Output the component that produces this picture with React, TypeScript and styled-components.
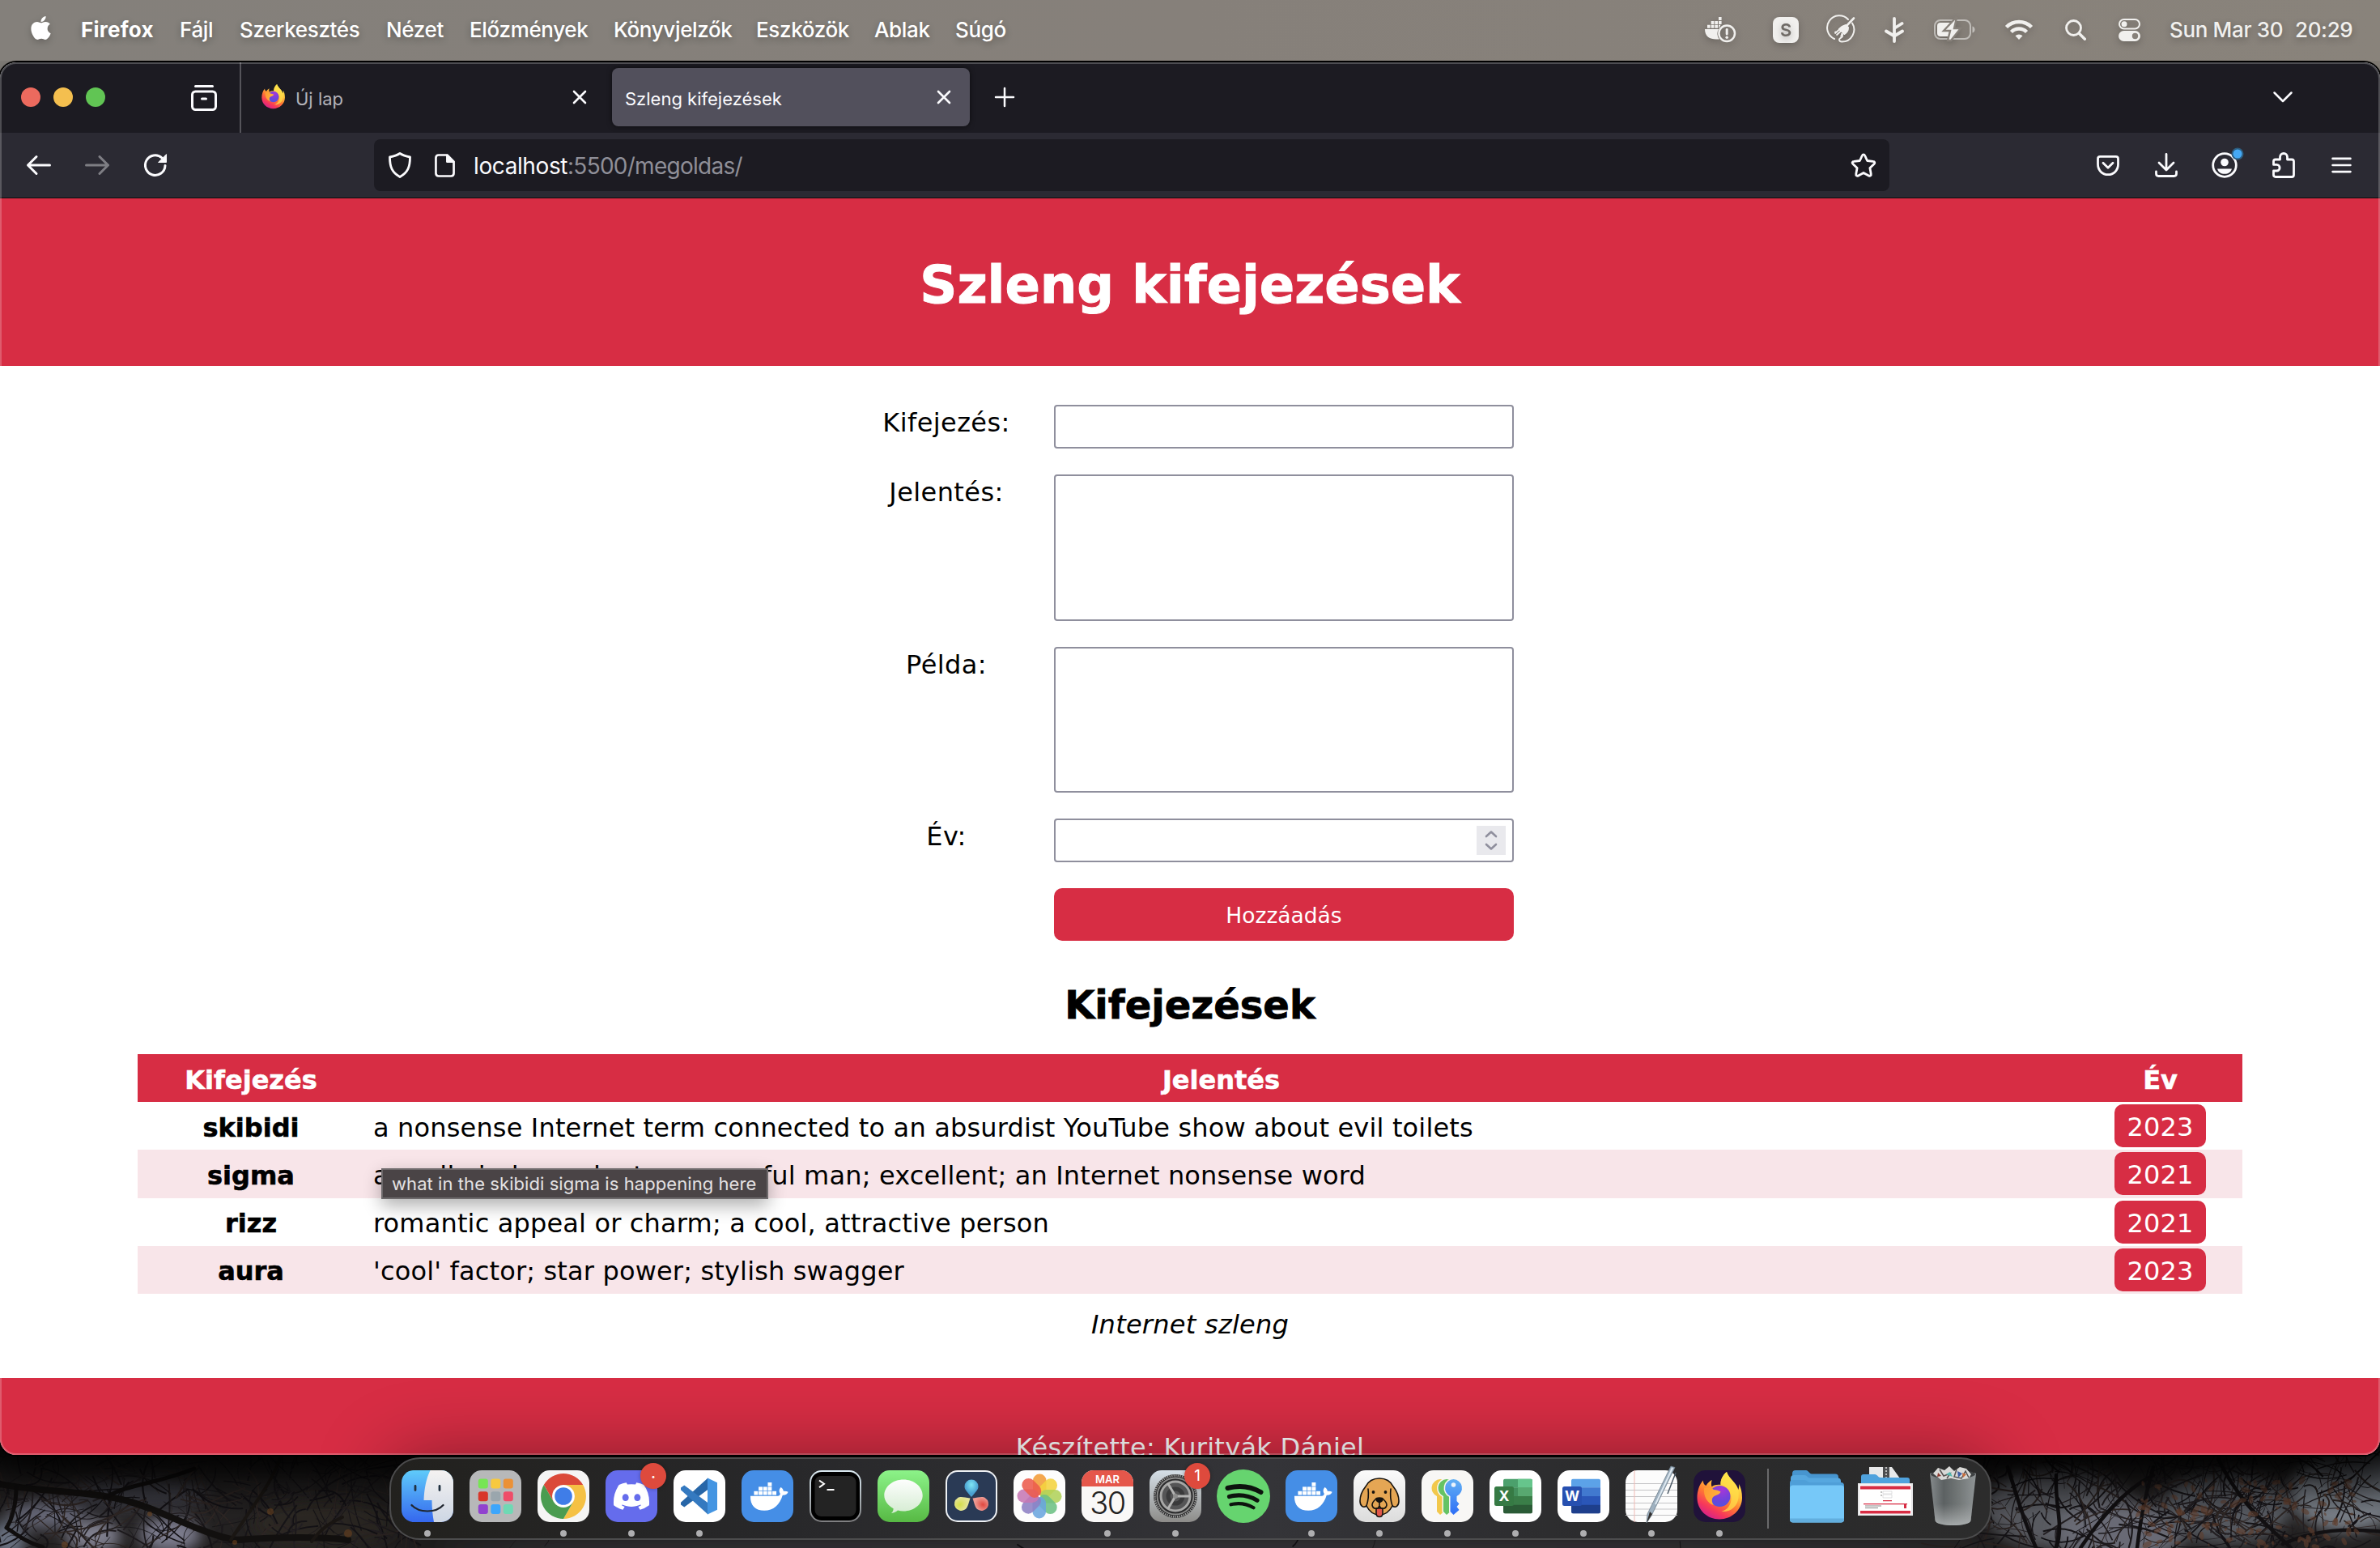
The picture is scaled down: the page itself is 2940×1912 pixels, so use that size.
import React from 'react';
import styled, { createGlobalStyle } from 'styled-components';
import { FaApple, FaDiscord } from 'react-icons/fa';

const RED = '#d72d44';
const SYSTEM_FONT = `Inter, "Liberation Sans", sans-serif`;
const PAGE_FONT = `"DejaVu Sans", Verdana, sans-serif`;

const GlobalStyle = createGlobalStyle`
  * { box-sizing: border-box; }
  body { margin: 0; overflow: hidden; background: #0b0b0c; }
`;

/* ---------- Desktop ---------- */

const Desktop = styled.div`
  position: relative;
  width: 2940px;
  height: 1912px;
  overflow: hidden;
  display: flex;
  flex-direction: column;
  background: linear-gradient(90deg, #84807b, #89837b) 0 0 / 100% 200px no-repeat, #0b0b0c;
  font-family: ${SYSTEM_FONT};
`;

const Wallpaper = styled.svg`
  position: absolute;
  left: 0;
  bottom: 0;
  width: 2940px;
  height: 160px;
`;

/* ---------- Menu bar ---------- */

const MenuBar = styled.header`
  position: relative;
  flex: none;
  display: flex;
  align-items: center;
  height: 75px;
  padding: 0 0 2px 34px;
  background: linear-gradient(90deg, #84807b, #86807a 50%, #89837b);
  color: #fff;
  font-size: 26px;
  font-weight: 500;
  letter-spacing: -0.35px;
  line-height: 36px;
  white-space: pre;
  text-shadow: 0 3px 8px rgba(0, 0, 0, 0.3);

  svg { filter: drop-shadow(0 3px 4px rgba(0, 0, 0, 0.22)); }
`;

const AppleSlot = styled.span`
  display: flex;
  width: 66px;
  padding-bottom: 4px;
`;

const MenuItem = styled.span<{ $width: number; $strong?: boolean }>`
  width: ${(p) => p.$width}px;
  font-weight: ${(p) => (p.$strong ? 700 : 500)};
  letter-spacing: ${(p) => (p.$strong ? '0.25px' : 'inherit')};
`;

const StatusArea = styled.div`
  display: flex;
  align-items: center;
  margin-left: auto;
  color: #f1f0ee;
`;

const StatusSlot = styled.span<{ $width: number }>`
  display: flex;
  align-items: center;
  width: ${(p) => p.$width}px;
`;

/* ---------- Browser window ---------- */

const Window = styled.section`
  position: relative;
  flex: none;
  display: flex;
  flex-direction: column;
  height: 1720px;
  margin-top: 2px;
  border-radius: 20px;
  overflow: hidden;
  background: #fff;

  &::after {
    content: '';
    position: absolute;
    inset: 0;
    border-radius: 20px;
    box-shadow: inset 0 0 0 2px rgba(255, 255, 255, 0.22);
    pointer-events: none;
  }
`;

const WindowShade = styled.div`
  position: absolute;
  left: 0;
  top: 77px;
  width: 2940px;
  height: 1720px;
  border-radius: 20px;
  box-shadow: 0 0 0 2px #000, 0 18px 40px rgba(0, 0, 0, 0.7);
`;

const TabBar = styled.div`
  flex: none;
  display: flex;
  align-items: center;
  height: 87px;
  padding-bottom: 1px;
  background: #1c1b22;
  color: #fbfbfe;
`;

const TrafficLights = styled.div`
  display: flex;
  gap: 16px;
  width: 210px;
  padding-left: 26px;
`;

const Light = styled.span<{ $color: string }>`
  width: 24px;
  height: 24px;
  border-radius: 50%;
  background: ${(p) => p.$color};
`;

const TabOverview = styled.div`
  display: flex;
  align-items: center;
  justify-content: center;
  width: 88px;
  height: 87px;
  margin-bottom: -1px;
  padding-right: 4px;
  border-right: 2px solid #55545a;
  svg { margin-left: 2px; }
`;

const Tab = styled.div<{ $active?: boolean }>`
  display: flex;
  align-items: center;
  width: ${(p) => (p.$active ? 442 : 458)}px;
  height: 72px;
  padding: ${(p) => (p.$active ? '0 23px 0 16px' : '0 31px 0 23px')};
  border-radius: 8px;
  background: ${(p) => (p.$active ? '#52505c' : 'transparent')};
  box-shadow: ${(p) => (p.$active ? '0 0 6px rgba(0, 0, 0, 0.6)' : 'none')};
  color: ${(p) => (p.$active ? '#fbfbfe' : '#b3b2b8')};
  font-size: 22px;
  svg { color: #fbfbfe; }
`;

const TabTitle = styled.span`
  flex: 1;
  padding-top: 4px;
  line-height: 30px;
`;

const TabIcon = styled.span`
  display: flex;
  width: 44px;
  padding-bottom: 2px;
`;

const TabAction = styled.span<{ $pushRight?: boolean }>`
  display: flex;
  align-items: center;
  justify-content: center;
  width: 86px;
  margin-left: ${(p) => (p.$pushRight ? 'auto' : 0)};
  margin-right: ${(p) => (p.$pushRight ? '77px' : 0)};
`;

const NavBar = styled.div`
  flex: none;
  display: flex;
  align-items: center;
  height: 81px;
  padding: 0 12px;
  background: #2b2a33;
  border-bottom: 1px solid #0c0c0d;
  color: #fbfbfe;
`;

const NavButton = styled.span<{ $dim?: boolean }>`
  display: flex;
  justify-content: center;
  width: 72px;
  opacity: ${(p) => (p.$dim ? 0.4 : 1)};
`;

const UrlBar = styled.div`
  flex: 1;
  display: flex;
  align-items: center;
  height: 64px;
  margin: 0 234px;
  padding: 0 16px 0 18px;
  border-radius: 8px;
  background: #1c1b22;
  font-size: 28px;
  letter-spacing: -0.74px;
  line-height: 40px;
  svg + svg { margin-left: 29px; }
`;

const UrlText = styled.span`
  flex: 1;
  padding: 2px 0 0 23px;
  color: #8f8f98;
  b { color: #fbfbfe; font-weight: 400; letter-spacing: -0.4px; }
`;

/* ---------- Page ---------- */

const Page = styled.main`
  display: flex;
  flex-direction: column;
  align-items: center;
  color: #000;
  font-family: ${PAGE_FONT};
  font-size: 32px;
  letter-spacing: 0.16px;
  line-height: 44px;
`;

const PageHeader = styled.div`
  width: 100%;
  height: 207px;
  padding-top: 68px;
  background: ${RED};
`;

const PageTitle = styled.h1`
  margin: 0;
  color: #fff;
  font-size: 64px;
  letter-spacing: -0.05px;
  line-height: 78px;
  text-align: center;
  -webkit-text-stroke: 1px currentColor;
`;

const Form = styled.form`
  display: grid;
  grid-template-columns: 266px 568px;
  row-gap: 32px;
  width: 868px;
  padding: 48px 0 0;
`;

const Label = styled.label`
  letter-spacing: 0.4px;
  text-align: center;
`;

const fieldStyles = `
  display: block;
  width: 100%;
  margin: 0;
  border: 2px solid #8f8f9d;
  border-radius: 4px;
  background: #fff;
  outline: none;
`;

const TextInput = styled.input`
  ${fieldStyles}
  height: 54px;
`;

const TextArea = styled.textarea<{ $height: number }>`
  ${fieldStyles}
  height: ${(p) => p.$height}px;
  resize: none;
`;

const NumberField = styled.div`
  ${fieldStyles}
  display: flex;
  align-items: center;
  justify-content: flex-end;
  height: 54px;
  padding-right: 8px;
`;

const Spinner = styled.span`
  display: flex;
  align-items: center;
  justify-content: center;
  width: 36px;
  height: 36px;
  background: #e9e9ed;
  color: #8f8f9d;
`;

const SubmitButton = styled.button`
  grid-column: 2;
  height: 65px;
  padding: 1px 0 0;
  border: 0;
  border-radius: 10px;
  background: ${RED};
  color: #fff;
  font-family: inherit;
  font-size: 26.5px;
`;

const SectionTitle = styled.h2`
  margin: 50px 0 32px;
  font-size: 48px;
  letter-spacing: 0;
  line-height: 58px;
  -webkit-text-stroke: 0.8px currentColor;
`;

const Table = styled.div`
  display: grid;
  grid-auto-rows: 59.2px;
  width: 2600px;
`;

const TableRow = styled.div<{ $kind: 'head' | 'plain' | 'tinted' }>`
  display: grid;
  grid-template-columns: 280px 2117px 203px;
  align-items: center;
  background: ${(p) => (p.$kind === 'head' ? RED : p.$kind === 'tinted' ? '#f8e5e9' : '#fff')};
  color: ${(p) => (p.$kind === 'head' ? '#fff' : '#000')};
`;

const HeadCell = styled.span`
  padding-top: 4px;
  font-weight: 700;
  letter-spacing: 0;
  text-align: center;
  -webkit-text-stroke: 0.6px currentColor;
`;

const MeaningCell = styled.span`
  padding: 4px 0 0 11px;
  white-space: nowrap;
`;

const YearCell = styled.span`
  display: flex;
  justify-content: center;
`;

const YearBadge = styled.span`
  width: 113px;
  height: 53px;
  padding-top: 6px;
  border-radius: 10px;
  background: ${RED};
  color: #fff;
  text-align: center;
`;

const Caption = styled.p`
  margin: 16px 0 44px;
  font-style: italic;
  letter-spacing: 0.25px;
`;

const PageFooter = styled.footer`
  width: 100%;
  height: 150px;
  padding-top: 64px;
  background: ${RED};
  color: #fff;
  letter-spacing: 0.28px;
  text-align: center;
`;

const Tooltip = styled.div`
  position: absolute;
  left: 471px;
  top: 1443px;
  width: 478px;
  height: 38px;
  padding-left: 11px;
  border: 2px solid #6d696b;
  background: #4a4446;
  box-shadow: 0 8px 22px rgba(0, 0, 0, 0.32);
  color: #e4e2e3;
  font-size: 22px;
  letter-spacing: 0.07px;
  line-height: 35px;
  white-space: nowrap;
`;

/* ---------- Dock ---------- */

const Dock = styled.nav`
  position: absolute;
  left: 481px;
  top: 1800px;
  width: 1979px;
  height: 102px;
  display: flex;
  align-items: flex-start;
  padding: 14px 0 0 3px;
  border: 2px solid #4c4c4d;
  border-radius: 38px;
  background: linear-gradient(90deg, #22211e, #28282a 25%, #343438 55%, #2a2a2b 80%, #2c2c2c);
  box-shadow: 0 0 90px rgba(0, 0, 0, 0.4);
`;

const DockSlot = styled.div<{ $width?: number }>`
  position: relative;
  display: flex;
  flex-direction: column;
  align-items: center;
  width: ${(p) => p.$width ?? 84}px;
`;

const RunningDot = styled.i`
  width: 8px;
  height: 8px;
  margin-top: 10px;
  border-radius: 50%;
  background: #aeaeb0;
`;

const Badge = styled.span<{ $small?: boolean }>`
  position: absolute;
  left: 53px;
  top: -9px;
  width: 32px;
  height: 32px;
  border-radius: 50%;
  background: #de4a3d;
  box-shadow: 0 0 5px rgba(0, 0, 0, 0.3);
  color: #fff;
  font-size: ${(p) => (p.$small ? 9 : 19)}px;
  line-height: ${(p) => (p.$small ? 34 : 32)}px;
  text-align: center;
`;

const DockDivider = styled.span`
  width: 2px;
  height: 74px;
  margin: -2px 24px 0 17px;
  background: #69696b;
`;

const Glyph = styled.svg`
  display: block;
  flex: none;
  overflow: visible;
`;

/* ---------- Line icons ---------- */

type LineProps = { w: number; h: number; vb: string; sw?: number; children: React.ReactNode };
const Line = ({ w, h, vb, sw = 3, children }: LineProps) => (
  <Glyph width={w} height={h} viewBox={vb} fill="none" stroke="currentColor" strokeWidth={sw} strokeLinecap="round" strokeLinejoin="round">
    {children}
  </Glyph>
);

const CloseIcon = () => <Line w={18} h={18} vb="0 0 18 18" sw={2.6}><path d="M2 2l14 14M16 2L2 16" /></Line>;

const DockerShape = ({ scale = 1 }: { scale?: number }) => (
  <g transform={`scale(${scale})`} fill="currentColor" stroke="none">
    <path d="M0 16.500h34.500c2-.2 3-1.300 3-3-1.900-3-1.200-6 .8-8 2.300 1.500 3.200 3 3.300 5 2.200-.4 4.200 0 6 1-1 2.800-3.400 4.100-7 4C37 27.500 29 35 17.500 35 6.500 35-.5 28.500 0 16.500z" />
    {[[4.500, 10.500], [10.300, 10.500], [16.100, 10.500], [21.900, 10.500], [27.700, 10.500], [10.300, 5], [16.100, 5], [21.900, 5], [21.900, -0.500]].map(([x, y]) => (
      <rect key={`${x}-${y}`} x={x} y={y} width="5" height="4.800" />
    ))}
  </g>
);

const StatusIcons = () => (
  <>
    <StatusSlot $width={84}>
      <Glyph width="39" height="32" viewBox="0 0 39 32">
        <g fill="currentColor">
          <path d="M0 15h17a11 11 0 0 0 1 12.500h-4C6 27.500 0 24 0 15z" />
          <path d="M3 9.800h3.700v4H3zM7.700 9.800h3.700v4H7.700zM12.300 9.800H16v4h-3.700zM17 9.800h2.500l-2 4H17zM7.700 5h3.700v4H7.700zM12.300 5H16v4h-3.700zM17 5h3.600v4H17zM17 0h3.600v4H17z" />
          <rect x="25.700" y="14" width="3" height="8.500" rx="1.400" />
          <circle cx="27.200" cy="25.300" r="1.800" />
        </g>
        <circle cx="27.200" cy="20.300" r="9.800" fill="none" stroke="currentColor" strokeWidth="2.500" />
      </Glyph>
    </StatusSlot>
    <StatusSlot $width={70}>
      <Glyph width="32" height="32" viewBox="0 0 32 32">
        <rect width="32" height="32" rx="8" fill="currentColor" />
        <text x="16" y="24" textAnchor="middle" fontFamily={SYSTEM_FONT} fontSize="22" fontWeight="600" fill="#6f6b66">S</text>
      </Glyph>
    </StatusSlot>
    <StatusSlot $width={68}>
      <Line w={32} h={32} vb="0 0 32 32" sw={2}>
        <path d="M6 27A15 15 0 1 1 23 3M28 7.500a15 15 0 0 1-13 23c-3 0-4-3-1.500-4.500 3-1.500 3-3 1.500-5" />
        <path d="M30 1.500L20 12" strokeWidth="2.600" />
        <path d="M20 10c-4 1-5.500 2-8 5l6.500 6c3-2 4.500-4.500 4.500-8z" fill="currentColor" />
        <path d="M12.500 15L7 20M14.500 17L9 22M17.500 20L14 23.500M9 18l-2 .5" strokeWidth="1.700" />
      </Line>
    </StatusSlot>
    <StatusSlot $width={61}>
      <Line w={24} h={32} vb="0 0 24 32" sw={3.800}>
        <path d="M12 2v28M2 17.500l10 6M22 17.500l-10 6M21.500 8L12 14" />
      </Line>
    </StatusSlot>
    <StatusSlot $width={88}>
      <Glyph width="52" height="26" viewBox="0 0 52 26">
        <rect x="1" y="1" width="44" height="23" rx="7" fill="none" stroke="currentColor" strokeOpacity=".55" strokeWidth="2" />
        <path d="M47.500 8.500c4 1 4 7 0 8z" fill="currentColor" fillOpacity=".55" />
        <rect x="4" y="4" width="19" height="17" rx="4" fill="currentColor" />
        <path d="M27-2L12 14h8l-3 12h4L33 11h-8l3-13z" fill="currentColor" stroke="#87817a" strokeWidth="2.400" />
      </Glyph>
    </StatusSlot>
    <StatusSlot $width={74}>
      <Line w={34} h={26} vb="0 0 34 26" sw={4.500}>
        <g strokeLinecap="butt"><path d="M1.500 9.500a22 22 0 0 1 31 0M7.500 15.500a13.500 13.500 0 0 1 19 0" /></g>
        <path d="M17 25l-4.500-4.700a6.500 6.500 0 0 1 9 0z" fill="currentColor" stroke="none" />
      </Line>
    </StatusSlot>
    <StatusSlot $width={66}>
      <Line w={26} h={26} vb="0 0 26 26" sw={2.800}><circle cx="10.500" cy="10.500" r="9" /><path d="M17.300 17.300l7 7" strokeWidth="3.400" /></Line>
    </StatusSlot>
    <StatusSlot $width={63}>
      <Glyph width="27" height="28" viewBox="0 0 27 28" fill="none" stroke="currentColor" strokeWidth="2">
        <rect x="1" y="1" width="25" height="11.500" rx="5.700" />
        <circle cx="7" cy="6.800" r="3.500" fill="currentColor" stroke="none" />
        <rect x="0" y="15" width="27" height="13" rx="6.500" fill="currentColor" stroke="none" />
        <circle cx="20.500" cy="21.500" r="3.700" fill="#87817a" stroke="none" />
      </Glyph>
    </StatusSlot>
  </>
);

/* ---------- Dock icons, all drawn on a 64 unit square ---------- */

const FirefoxLogo = ({ size, id }: { size: number; id: string }) => (
  <Glyph width={size} height={size} viewBox="0 0 64 64">
    <defs>
      <linearGradient id={`${id}-flame`} x1=".8" y1=".1" x2=".3" y2="1">
        <stop offset="0" stopColor="#fff04f" /><stop offset=".3" stopColor="#ffc23c" /><stop offset=".55" stopColor="#ff7b32" /><stop offset=".8" stopColor="#f7385a" /><stop offset="1" stopColor="#d3218d" />
      </linearGradient>
      <radialGradient id={`${id}-globe`} cx=".6" cy=".2" r=".9">
        <stop offset="0" stopColor="#a637d8" /><stop offset=".6" stopColor="#6a45dc" /><stop offset="1" stopColor="#4b57e0" />
      </radialGradient>
      <linearGradient id={`${id}-fox`} x1="0" y1="0" x2="1" y2=".4">
        <stop offset="0" stopColor="#ff9a33" /><stop offset="1" stopColor="#ffb23a" />
      </linearGradient>
    </defs>
    <path fill={`url(#${id}-flame)`} d="M41 2c-5 4-8 10-7.500 16-4-.5-8 .3-11 2.200-.8-2.700-.7-5.200.2-8.200-3 1.500-5.500 4-7.200 7-2.500-1-3.700-3.700-3.700-6.500C7 18 4.500 26 4.500 34 4.500 49 17 60.500 32 60.500S60 49 60 34c0-7-1.300-12.500-4-17 .3 3 .2 5-.8 7C53 15 44 11 41 2z" />
    <path fill="#ffdf4a" d="M41 2c-5 4-8 10-7.500 16 7 1.500 13 8 13 17 0 8-5 14-12 16 12 1 20-7 21-17 .5-5 .3-7-.3-10C53 15 44 11 41 2z" opacity=".75" />
    <circle cx="32.500" cy="32" r="13" fill={`url(#${id}-globe)`} />
    <path fill={`url(#${id}-fox)`} d="M13 22c5-1.500 9-.5 12 2 3 .5 6 .7 8.500 2.500-1.500 3.500-5 4-8 5.500-3.500 2-3.500 7-.5 11-8-2-13-11-12-21z" />
  </Glyph>
);

const IconBase = ({ fill, children }: { fill: string; children?: React.ReactNode }) => (
  <Glyph width="64" height="64" viewBox="0 0 64 64"><rect width="64" height="64" rx="15" fill={fill} />{children}</Glyph>
);

const Finder = () => (
  <IconBase fill="url(#finder-blue)">
    <defs>
      <linearGradient id="finder-blue" x2="0" y2="1"><stop stopColor="#5fcbfa" /><stop offset="1" stopColor="#3567ee" /></linearGradient>
      <linearGradient id="finder-white" x2="0" y2="1"><stop stopColor="#f4f2f1" /><stop offset="1" stopColor="#cdd6e4" /></linearGradient>
    </defs>
    <path d="M35.500 0H49a15 15 0 0 1 15 15v34a15 15 0 0 1-15 15h-9c-1.500-8-2.500-17-2.500-27h-10C28 23 30.500 10 35.500 0z" fill="url(#finder-white)" />
    <path d="M17 19.500v5M47 19.500v5" stroke="#20303f" strokeWidth="2.800" strokeLinecap="round" />
    <path d="M12.500 43c9 10 30 10 39 0" stroke="#20262f" strokeWidth="2.200" strokeLinecap="round" fill="none" />
  </IconBase>
);

const launchColors = ['#76e553', '#f7c93f', '#eb9136', '#d8372a', '#9aa6ad', '#ef4d68', '#9142cf', '#3da6fb', '#6fd9b4'];
const Launchpad = () => (
  <IconBase fill="#b7b8b9">
    {launchColors.map((c, i) => <rect key={c} x={10.800 + (i % 3) * 15.500} y={10.500 + Math.floor(i / 3) * 15.700} width="12" height="12" rx="3" fill={c} />)}
  </IconBase>
);

const Chrome = () => (
  <IconBase fill="#f5f5f4">
    <g transform="translate(32 32)">
      <path d="M-24.200-14A28 28 0 0 1 24.200-14H0A14 14 0 0 0-12.100 7z" fill="#db4a39" />
      <path d="M24.200-14A28 28 0 0 1 0 28L12.100 7A14 14 0 0 0 0-14z" fill="#f5c144" />
      <path d="M0 28A28 28 0 0 1-24.200-14L-12.100 7A14 14 0 0 0 12.100 7z" fill="#4a9c50" />
      <circle r="13.300" fill="#fff" /><circle r="10.800" fill="#3f7de8" />
    </g>
  </IconBase>
);

const VsCode = () => (
  <IconBase fill="#fff">
    <path d="M42.500 9.500v14.300L13.300 45.500l-4.300-3v-2.700z" fill="#2766a8" />
    <path d="M42.500 54.500V40.200L13.300 18.500l-4.300 3v2.700z" fill="#3479c0" />
    <path d="M42 9.500l12 5.800v33.400l-12 5.800z" fill="#4495e2" />
  </IconBase>
);

const Docker = () => (
  <IconBase fill="#458ee6"><g transform="translate(11 15.500)" color="#fff"><DockerShape scale={0.980} /></g></IconBase>
);

const Terminal = () => (
  <IconBase fill="url(#term-frame)">
    <defs><linearGradient id="term-frame" x2="0" y2="1"><stop stopColor="#dcecf4" /><stop offset="1" stopColor="#7e7e80" /></linearGradient></defs>
    <rect x="2" y="2" width="60" height="60" rx="13" fill="#000" />
    <rect x="6.500" y="7" width="51" height="50" rx="8" fill="#232323" />
    <path d="M12 12.500l6 4.300-6 4.300M21.500 24h9" fill="none" stroke="#fff" strokeWidth="2" />
  </IconBase>
);

const Messages = () => (
  <IconBase fill="url(#msg-green)">
    <defs>
      <linearGradient id="msg-green" x2="0" y2="1"><stop stopColor="#8cf389" /><stop offset="1" stopColor="#57b944" /></linearGradient>
      <linearGradient id="msg-bubble" x2="0" y2="1"><stop stopColor="#fdfefd" /><stop offset="1" stopColor="#d5ecd2" /></linearGradient>
    </defs>
    <path d="M32 11.500c13 0 23.700 8.700 23.700 19.500S45 50.500 32 50.500c-2.500 0-4.500-.3-7-.9-2 1.900-4.500 3-8 3.400 1.800-1.500 2.600-3.500 2.600-5.800C13 43.500 8.300 37.500 8.300 31 8.300 20.200 19 11.500 32 11.500z" fill="url(#msg-bubble)" />
  </IconBase>
);

const drop = 'M0 0C-5-6-8.500-9-8.500-13a8.500 8.500 0 0 1 17 0C8.500-9 5-6 0 0z';
const DaVinci = () => (
  <IconBase fill="#eef1f4">
    <defs>
      <radialGradient id="dv-b" cx=".5" cy=".3"><stop stopColor="#7fe6f5" /><stop offset="1" stopColor="#4a9fd0" /></radialGradient>
      <radialGradient id="dv-y" cx=".5" cy=".3"><stop stopColor="#d6df4a" /><stop offset="1" stopColor="#e6e59a" /></radialGradient>
      <radialGradient id="dv-r" cx=".5" cy=".3"><stop stopColor="#e0473f" /><stop offset="1" stopColor="#ee9b93" /></radialGradient>
    </defs>
    <rect x="2" y="2" width="60" height="60" rx="13" fill="#2a3a55" />
    <path transform="translate(32 33)" d={drop} fill="url(#dv-b)" />
    <path transform="translate(30.500 34.500) rotate(-122)" d={drop} fill="url(#dv-y)" />
    <path transform="translate(33.500 34.500) rotate(122)" d={drop} fill="url(#dv-r)" />
  </IconBase>
);

const petals = ['#f29c38', '#f4d33f', '#b0d15a', '#6cc084', '#6aa5de', '#8d7fc4', '#c678b4', '#ec5b4c'];
const Photos = () => (
  <IconBase fill="#fdfdfd">
    {petals.map((c, i) => <rect key={c} x="24" y="4.500" width="16.500" height="27" rx="8.200" fill={c} opacity=".88" transform={`rotate(${i * 45} 32 32)`} />)}
    <circle cx="32" cy="32" r="1.300" fill="#fff" />
  </IconBase>
);

const Calendar = () => (
  <IconBase fill="#f9f8f7">
    <path d="M0 20v-5A15 15 0 0 1 15 0h34a15 15 0 0 1 15 15v5z" fill="#e5574b" />
    <text x="32" y="15.500" textAnchor="middle" fontFamily={SYSTEM_FONT} fontSize="13" fontWeight="600" fill="#fff">MAR</text>
    <text x="32" y="54" textAnchor="middle" fontFamily={SYSTEM_FONT} fontSize="38" fontWeight="300" letterSpacing="-1.500" fill="#222">30</text>
  </IconBase>
);

const Settings = () => (
  <IconBase fill="url(#set-bg)">
    <defs><linearGradient id="set-bg" x2="0" y2="1"><stop stopColor="#d5dfe7" /><stop offset="1" stopColor="#8d8c89" /></linearGradient></defs>
    <circle cx="32" cy="32" r="27" fill="#2b2b2c" />
    <circle cx="32" cy="32" r="25.500" fill="none" stroke="#a5a5a4" strokeWidth="2.500" strokeDasharray="1.300 1.300" />
    <circle cx="32" cy="32" r="22.500" fill="none" stroke="#8b8b8a" strokeWidth="1.800" />
    <circle cx="32" cy="32" r="18" fill="#555556" stroke="#a7a7a6" strokeWidth="3" />
    <circle cx="32" cy="32" r="9" fill="none" stroke="#3a3a3b" strokeWidth="5" />
    <path d="M32 32L22.500 16M32 32L22.500 48M32 32h18" stroke="#b3b3b2" strokeWidth="3" />
    <circle cx="32" cy="32" r="3" fill="#8e8e8d" />
  </IconBase>
);

const Spotify = () => (
  <Glyph width="64" height="64" viewBox="0 0 64 64">
    <circle cx="32" cy="32" r="33" fill="#66d46f" />
    <g fill="none" stroke="#0d130e" strokeLinecap="round">
      <path d="M12.500 22c13-3.500 28-2.500 41 5" strokeWidth="6" />
      <path d="M14.500 32.500c12-3 23-2 34.500 4.700" strokeWidth="5.200" />
      <path d="M16.500 42.300c10-2.500 18.500-1.500 28 4" strokeWidth="4.200" />
    </g>
  </Glyph>
);

const Dog = () => (
  <IconBase fill="url(#dog-bg)">
    <defs><linearGradient id="dog-bg" x2="0" y2="1"><stop stopColor="#fbfbfb" /><stop offset="1" stopColor="#dcdcdc" /></linearGradient></defs>
    <g stroke="#17130f" strokeWidth="1.600" strokeLinejoin="round" strokeLinecap="round">
      <path d="M32 10c-9 0-14 4-17 10-4 5-7 12-7 18 0 6 4 9 8 6 4 8 10 11 16 11s12-3 16-11c4 3 8 0 8-6 0-6-3-13-7-18-3-6-8-10-17-10z" fill="#e5a654" />
      <path d="M18 23c1 8 0 15-2 21M46 23c-1 8 0 15 2 21" fill="none" />
      <path d="M28 47v6c0 6 8 6 8 0v-6z" fill="#e2574c" />
      <path d="M32 39v5c-2 5-8 4-9-1M32 44c2 5 8 4 9-1M23 43c0-4 3-6 5-8M41 43c0-4-3-6-5-8" fill="none" />
      <path d="M28 35.500c0-2 8-2 8 0 0 2-2 4-4 4s-4-2-4-4z" fill="#17130f" />
    </g>
    <circle cx="24.500" cy="27" r="1.900" fill="#17130f" /><circle cx="39.500" cy="27" r="1.900" fill="#17130f" />
  </IconBase>
);

const keyPath = 'M0 0a11 11 0 0 1 4 21v6l3 3.500-3 3.500 3 4-7 6-4-4V21A11 11 0 0 1 0 0z';
const Passwords = () => (
  <IconBase fill="#f8f7f5">
    <defs><linearGradient id="key-blue" x2="0" y2="1"><stop stopColor="#62b0f4" /><stop offset="1" stopColor="#2e6ff6" /></linearGradient></defs>
    <g transform="translate(23 11)"><path d={keyPath} fill="#f2c84c" /></g>
    <g transform="translate(31 11)"><path d={keyPath} fill="#f8f7f5" stroke="#f8f7f5" strokeWidth="3" /><path d={keyPath} fill="#66c364" /></g>
    <g transform="translate(39.500 11)"><path d={keyPath} fill="#f8f7f5" stroke="#f8f7f5" strokeWidth="3" /><path d={keyPath} fill="url(#key-blue)" /><circle cy="7" r="2.800" fill="#eaf3fb" /></g>
  </IconBase>
);

const OfficeIcon = ({ letter, bands, tile, grid }: { letter: string; bands: string[]; tile: string; grid?: boolean }) => (
  <IconBase fill="#fff">
    <clipPath id={`office-${letter}`}><rect x="17" y="10.500" width="36" height="43" rx="2.500" /></clipPath>
    <g clipPath={`url(#office-${letter})`}>
      {bands.map((c, i) => <rect key={c} x="17" y={10.500 + i * 10.750} width="36" height="11" fill={c} />)}
      {grid && <><rect x="35" y="10.500" width="18" height="11" fill="#66c58c" /><rect x="35" y="21.300" width="18" height="10.700" fill="#58a870" /></>}
    </g>
    <rect x="6" y="20" width="24" height="24" rx="2.500" fill={tile} />
    <text x="18" y="38.300" textAnchor="middle" fontFamily={SYSTEM_FONT} fontSize="17.500" fontWeight="700" fill="#fff">{letter}</text>
  </IconBase>
);

const TextEdit = () => (
  <IconBase fill="#fcfcfc">
    <path d="M0 16.500h64M0 24.500h64M0 32.500h64M0 40.500h64M0 48h64M0 55.500h64" stroke="#c4c4c6" strokeWidth="1.200" />
    <path d="M11 0v64" stroke="#f0b9b4" strokeWidth="1" />
    <path d="M56-5l5 1.500L32 56l-6 9 1-11z" fill="#9fb1c0" stroke="#6f7f8d" strokeWidth=".8" />
    <path d="M58-3L37 42" stroke="#dfe9f1" strokeWidth="1.800" />
    <path d="M30 51l-4 14 7-11z" fill="#33302f" />
    <path d="M62 3L52 29" stroke="#4c5966" strokeWidth="1.500" />
  </IconBase>
);

const FirefoxDock = () => (
  <IconBase fill="#20123a"><FirefoxLogo size={64} id="ff-dock" /></IconBase>
);

const FolderStack = () => (
  <Glyph width="67" height="65" viewBox="0 0 67 65">
    <path d="M7 0h13c3 0 4 4.500 7 4.500h29q4 0 4 4V20H3V4q0-4 4-4z" fill="#4795cf" />
    <path d="M5 6h13c3 0 4 3.500 7 3.500h34q4 0 4 4V30H1V10q0-4 4-4z" fill="#56a7df" />
    <path d="M3 12h15c3 0 4 3 7 3h38q4 0 4 4v41q0 4-4 4H4q-4 0-4-4V16q0-4 3-4z" fill="#4f9fd8" />
    <rect y="18.500" width="67" height="46" rx="4" fill="#76c8f8" />
    <path d="M0 59.500h67v1q0 4-4 4H4q-4 0-4-4z" fill="#62aede" />
  </Glyph>
);

const Downloads = () => (
  <Glyph width="68" height="61" viewBox="0 4 68 61">
    <path d="M14 0h28l10 14H14z" fill="#e8e9ea" /><path d="M31 0h8v14h-8z" fill="#4b4c4f" /><path d="M35 0v14" stroke="#bbb" strokeDasharray="2 2" strokeWidth="2" />
    <path d="M7 9h14c3 0 4 4 7 4h33q3 0 3 3v6H4V12q0-3 3-3z" fill="#4fa2dd" />
    <rect x="0" y="20" width="68" height="40" fill="#e4e4e6" /><rect x="2" y="21.500" width="64" height="37" fill="#fff" />
    <path d="M3 23.500h62v4H3zM31 41h11v1.300H31zM7 45h54v1.300H7zM57 46h3v5h-3zM3 54h62v3.500H3z" fill={RED} />
    <path d="M31 30h11v3H31zM31 34h11v4H31z" fill="none" stroke="#c9c9ce" strokeWidth=".6" />
    <path d="M9 48h20M9 50.500h16M28 31h2M28 35h2" stroke="#777" strokeWidth=".9" />
  </Glyph>
);

const Trash = () => (
  <Glyph width="57" height="75" viewBox="0 5 57 75">
    <defs>
      <linearGradient id="trash-body" x2="1" y2="0"><stop stopColor="#858a8c" /><stop offset=".3" stopColor="#5c6162" /><stop offset=".65" stopColor="#747979" /><stop offset="1" stopColor="#8f9496" /></linearGradient>
      <linearGradient id="trash-low" x2="0" y2="1"><stop offset=".6" stopColor="#aaa" stopOpacity="0" /><stop offset="1" stopColor="#b4b9ba" stopOpacity=".8" /></linearGradient>
    </defs>
    <path d="M0 9c4-3 53-3 57 0l-6.500 58c-1 8-43 8-44 0z" fill="url(#trash-body)" />
    <path d="M0 9c4-3 53-3 57 0l-6.500 58c-1 8-43 8-44 0z" fill="url(#trash-low)" />
    <ellipse cx="28.500" cy="10" rx="27.500" ry="5.500" fill="#3f4243" />
    <path d="M4 9l6-7 8 3 6-5 6 6 7-5 8 2 6 7-3 5-12 2-10-2-12 2z" fill="#d9d9d7" />
    <path d="M12 4l5 8 8-3-4 6M33 4l-3 9 9 2 5-9 4 8" stroke="#55514f" strokeWidth="1.500" fill="none" />
    <path d="M20 10l5-3 3 6z" fill="#55b8b0" /><path d="M34 6l6 3-5 5z" fill="#3f5fa5" /><path d="M10 8l4 4-5 1z" fill="#8a3a30" /><path d="M40 8l5 2-4 4z" fill="#c96d3c" />
  </Glyph>
);

type DockEntry = { name: string; icon: React.ReactNode; running?: boolean; badge?: string };
const dockApps: DockEntry[] = [
  { name: 'finder', icon: <Finder />, running: true },
  { name: 'launchpad', icon: <Launchpad /> },
  { name: 'chrome', icon: <Chrome />, running: true },
  { name: 'discord', icon: <IconBase fill="#656cec"><FaDiscord x={8} y={8} size={48} color="#fff" /></IconBase>, running: true, badge: '•' },
  { name: 'vscode', icon: <VsCode />, running: true },
  { name: 'docker', icon: <Docker /> },
  { name: 'terminal', icon: <Terminal /> },
  { name: 'messages', icon: <Messages /> },
  { name: 'davinci', icon: <DaVinci /> },
  { name: 'photos', icon: <Photos /> },
  { name: 'calendar', icon: <Calendar />, running: true },
  { name: 'settings', icon: <Settings />, running: true, badge: '1' },
  { name: 'spotify', icon: <Spotify /> },
  { name: 'docker-desktop', icon: <Docker />, running: true },
  { name: 'dog', icon: <Dog />, running: true },
  { name: 'passwords', icon: <Passwords />, running: true },
  { name: 'excel', icon: <OfficeIcon letter="X" bands={['#4ba06c', '#438f5c', '#3a7d48', '#2b5b36']} tile="#367a44" grid />, running: true },
  { name: 'word', icon: <OfficeIcon letter="W" bands={['#5ca2e8', '#4179cf', '#2a56b8', '#1e3f8c']} tile="#2750b0" />, running: true },
  { name: 'textedit', icon: <TextEdit />, running: true },
  { name: 'firefox', icon: <FirefoxDock />, running: true },
];

/* ---------- Wallpaper: bare branches against a dusky sky ---------- */

const makeBranches = () => {
  let seed = 20250330;
  const rnd = () => {
    seed = (seed * 1664525 + 1013904223) % 4294967296;
    return seed / 4294967296;
  };
  const out: { d: string; w: number; c: string }[] = [];
  const tones = ['#161417', '#1c191c', '#231f22', '#2d2523', '#131115'];
  for (let i = 0; i < 1150; i += 1) {
    const left = rnd() < 0.45;
    const x = left ? rnd() * 540 - 20 : rnd() < 0.9 ? 2420 + rnd() * 500 : 480 + rnd() * 2000;
    const y = rnd() * 165;
    const a = rnd() * Math.PI * 2;
    const len = 18 + rnd() * 60;
    const bend = (rnd() - 0.5) * 34;
    const ex = x + Math.cos(a) * len;
    const ey = y + Math.sin(a) * len;
    const mx = (x + ex) / 2 + Math.sin(a) * bend;
    const my = (y + ey) / 2 - Math.cos(a) * bend;
    out.push({ d: `M${x.toFixed(1)} ${y.toFixed(1)}Q${mx.toFixed(1)} ${my.toFixed(1)} ${ex.toFixed(1)} ${ey.toFixed(1)}`, w: 0.6 + rnd() * 1.6, c: tones[Math.floor(rnd() * 5)] });
  }
  const leaves = Array.from({ length: 130 }, () => ({ x: 2640 + rnd() * 280, y: 75 + rnd() * 85, r: 1.5 + rnd() * 5, a: rnd() * 180 }));
  return { out, leaves };
};
const forest = makeBranches();

const skyPatches: [number, number, number, number, string][] = [
  [60, 118, 50, 18, '#656676'], [115, 145, 34, 20, '#80808f'], [210, 143, 38, 22, '#7c7c8d'], [10, 150, 22, 24, '#6a7282'], [170, 95, 90, 20, '#3a3a42'],
  [400, 130, 90, 30, '#2b2722'],
  [2540, 110, 90, 50, '#5a5b62'], [2620, 140, 80, 38, '#696a74'], [2750, 110, 80, 44, '#55585f'], [2900, 90, 70, 50, '#767b84'], [2910, 60, 45, 34, '#666b72'], [1500, 158, 960, 12, '#3c3b40'],
];

const Forest = () => (
  <Wallpaper viewBox="0 0 2940 160">
    <defs>
      <filter id="haze" x="-30%" y="-50%" width="160%" height="200%"><feGaussianBlur stdDeviation="9" /></filter>
      <linearGradient id="dusk" x2="0" y2="1"><stop offset=".25" stopColor="#000" stopOpacity=".8" /><stop offset=".5" stopColor="#000" stopOpacity=".35" /><stop offset=".75" stopColor="#000" stopOpacity="0" /></linearGradient>
    </defs>
    <rect width="2940" height="160" fill="#232121" />
    {skyPatches.map(([x, y, rx, ry, c]) => <ellipse key={`${x}-${y}`} cx={x} cy={y} rx={rx} ry={ry} fill={c} filter="url(#haze)" />)}
    {forest.out.map((b) => <path key={b.d} d={b.d} stroke={b.c} strokeWidth={b.w} fill="none" />)}
    <g fill="none" strokeLinecap="round">
      <path d="M-5 80C50 92 100 88 150 100S240 140 290 150M290 150c30-2 90-6 140 0" stroke="#12100f" strokeWidth="8" />
      <path d="M20 85c0 20-5 40-12 50M8 135c15 10 25 18 45 24M130 98c30-18 60-16 110-36" stroke="#100e0e" strokeWidth="5" />
      <path d="M285 150c40-60 50-70 65-110M385 152c10-14 20-22 38-30" stroke="#1a1613" strokeWidth="4" />
      <path d="M2480 60c10 30 20 70 40 110M2540 70c-2 40 10 60 0 90M2660 60c-8 30-14 50-20 100M2740 50c30 60 60 80 90 110M2570 160c20-30 50-70 90-90M2820 155c40-18 80-20 125-15" stroke="#121012" strokeWidth="4.500" />
    </g>
    {forest.leaves.map((l) => <ellipse key={`${l.x}`} cx={l.x} cy={l.y} rx={l.r} ry={l.r * 0.55} transform={`rotate(${l.a} ${l.x} ${l.y})`} fill="#5f3d2d" opacity=".6" />)}
    <g fill="#6b4320" opacity=".6"><circle cx="334" cy="115" r="4" /><circle cx="185" cy="118" r="3" /><circle cx="430" cy="142" r="5" /><circle cx="80" cy="156" r="4" /><circle cx="290" cy="153" r="3" /></g>
    <rect width="2940" height="160" fill="url(#dusk)" />
  </Wallpaper>
);

/* ---------- Data ---------- */

const menuItems: [string, number][] = [
  ['Fájl', 74], ['Szerkesztés', 181], ['Nézet', 103], ['Előzmények', 178], ['Könyvjelzők', 176], ['Eszközök', 146], ['Ablak', 100], ['Súgó', 80],
];

const expressions = [
  { word: 'skibidi', meaning: 'a nonsense Internet term connected to an absurdist YouTube show about evil toilets', year: 2023 },
  { word: 'sigma', meaning: 'a really independent, successful man; excellent; an Internet nonsense word', year: 2021 },
  { word: 'rizz', meaning: 'romantic appeal or charm; a cool, attractive person', year: 2021 },
  { word: 'aura', meaning: "'cool' factor; star power; stylish swagger", year: 2023 },
];

export default function App() {
  return (
    <Desktop>
      <GlobalStyle />
      <Forest />
      <WindowShade />
      <MenuBar>
        <AppleSlot><FaApple size={33} /></AppleSlot>
        <MenuItem $width={122} $strong>Firefox</MenuItem>
        {menuItems.map(([label, width]) => <MenuItem key={label} $width={width}>{label}</MenuItem>)}
        <StatusArea>
          <StatusIcons />
          <StatusSlot $width={155}>Sun Mar 30</StatusSlot>
          <StatusSlot $width={105}>20:29</StatusSlot>
        </StatusArea>
      </MenuBar>

      <Window>
        <TabBar>
          <TrafficLights><Light $color="#ec6a5e" /><Light $color="#f4bf4f" /><Light $color="#61c554" /></TrafficLights>
          <TabOverview>
            <Line w={32} h={32} vb="0 0 32 32"><path d="M5.500 1.500h21" /><rect x="1.500" y="8" width="29" height="22.500" rx="4" /><path d="M13.500 17h5" /></Line>
          </TabOverview>
          <Tab>
            <TabIcon><FirefoxLogo size={33} id="ff-tab" /></TabIcon>
            <TabTitle>Új lap</TabTitle>
            <CloseIcon />
          </Tab>
          <Tab $active><TabTitle>Szleng kifejezések</TabTitle><CloseIcon /></Tab>
          <TabAction><Line w={24} h={24} vb="0 0 24 24" sw={2.500}><path d="M12 1v22M1 12h22" /></Line></TabAction>
          <TabAction $pushRight><Line w={24} h={14} vb="0 0 24 14" sw={2.500}><path d="M1.500 1.500L12 12 22.500 1.500" /></Line></TabAction>
        </TabBar>
        <NavBar>
          <NavButton><Line w={30} h={24} vb="0 0 30 24"><path d="M28.500 12H2M12 1.500L1.500 12 12 22.500" /></Line></NavButton>
          <NavButton $dim><Line w={30} h={24} vb="0 0 30 24"><path d="M1.500 12H28M18 1.500L28.500 12 18 22.500" /></Line></NavButton>
          <NavButton>
            <Line w={28} h={28} vb="0 0 28 28"><path d="M26 14.500A12.300 12.300 0 1 1 22 5" /><path d="M27.500 1v9.500H18z" fill="currentColor" strokeWidth="1" /></Line>
          </NavButton>
          <UrlBar>
            <Line w={28} h={32} vb="0 0 28 32" sw={2.800}><path d="M14 1.500c3 2 7 3.500 12.500 4.500C26.500 18 24 25 14 30.500 4 25 1.500 18 1.500 6 7 5 11 3.500 14 1.500z" /></Line>
            <Line w={25} h={29} vb="0 0 26 30" sw={2.800}><path d="M5 1.500h11l8.500 8.500v15q0 3.500-3.500 3.500H5Q1.500 28.500 1.500 25V5Q1.500 1.500 5 1.500z" /><path d="M16 2v8h8z" fill="currentColor" /></Line>
            <UrlText><b>localhost</b>:5500/megoldas/</UrlText>
            <Line w={32} h={31} vb="0 0 32 31" sw={2.800}><path d="M16 1.800c.8 0 1.300.5 1.600 1.200l3 6.500 7.200.9c2 .2 2.700 1.800 1.300 3.200l-5.200 5 1.300 7.200c.4 2-1.100 3-2.800 2.100L16 24.400l-6.400 3.500c-1.700.9-3.200-.1-2.800-2.100l1.300-7.200-5.200-5c-1.400-1.400-.7-3 1.300-3.200l7.200-.9 3-6.500c.3-.7.8-1.200 1.600-1.200z" /></Line>
          </UrlBar>
          <NavButton><Line w={28} h={25} vb="0 0 30 27"><path d="M4.500 1.500h21q3 0 3 3V12c0 8-6 13.500-13.500 13.500S1.500 20 1.500 12V4.500q0-3 3-3z" /><path d="M8.500 10l6.500 6.500L21.500 10" /></Line></NavButton>
          <NavButton><Line w={28} h={30} vb="0 0 28 30" sw={2.800}><path d="M14 1.500v19M5 12l9 9 9-9M1.500 23v2.500q0 3 3 3h19q3 0 3-3V23" /></Line></NavButton>
          <NavButton>
            <Line w={32} h={32} vb="0 0 32 32" sw={2.800}>
              <circle cx="16" cy="16" r="14.300" /><circle cx="16" cy="12.500" r="4.800" fill="currentColor" stroke="none" />
              <path d="M7 20.500h18c-1.500 4.500-4.500 6.300-9 6.300s-7.500-1.800-9-6.300z" fill="currentColor" stroke="none" />
              <circle cx="32" cy="2" r="7.500" fill="#2c5d80" stroke="none" /><circle cx="32" cy="2" r="5.500" fill="#45a9f5" stroke="none" />
            </Line>
          </NavButton>
          <NavButton>
            <Line w={28} h={32} vb="-1 0 28 32" sw={2.800}><path d="M4 9h5.500V6a4.500 4.500 0 0 1 9 0v3H24q2.500 0 2.500 2.500V28q0 2.500-2.500 2.500H4Q1.500 30.500 1.500 28v-5h3.800a3.800 3.800 0 0 0 0-7.600H1.500v-4Q1.500 9 4 9z" /></Line>
          </NavButton>
          <NavButton><Line w={25} h={20} vb="0 0 26 21" sw={2.800}><path d="M1.500 2h23M1.500 10.500h23M1.500 19h23" /></Line></NavButton>
        </NavBar>

        <Page>
          <PageHeader><PageTitle>Szleng kifejezések</PageTitle></PageHeader>
          <Form>
            <Label>Kifejezés:</Label><TextInput />
            <Label>Jelentés:</Label><TextArea $height={181} />
            <Label>Példa:</Label><TextArea $height={180} />
            <Label>Év:</Label>
            <NumberField>
              <Spinner><Line w={16} h={24} vb="0 0 16 24" sw={2.600}><path d="M2 7l6-5.500L14 7M2 17l6 5.500 6-5.500" /></Line></Spinner>
            </NumberField>
            <SubmitButton type="button">Hozzáadás</SubmitButton>
          </Form>
          <SectionTitle>Kifejezések</SectionTitle>
          <Table>
            <TableRow $kind="head"><HeadCell>Kifejezés</HeadCell><HeadCell>Jelentés</HeadCell><HeadCell>Év</HeadCell></TableRow>
            {expressions.map((e, i) => (
              <TableRow key={e.word} $kind={i % 2 ? 'tinted' : 'plain'}>
                <HeadCell>{e.word}</HeadCell>
                <MeaningCell>{e.meaning}</MeaningCell>
                <YearCell><YearBadge>{e.year}</YearBadge></YearCell>
              </TableRow>
            ))}
          </Table>
          <Caption>Internet szleng</Caption>
          <PageFooter>Készítette: Kurityák Dániel</PageFooter>
        </Page>
      </Window>

      <Tooltip>what in the skibidi sigma is happening here</Tooltip>

      <Dock>
        {dockApps.map((app) => (
          <DockSlot key={app.name}>
            {app.icon}
            {app.running && <RunningDot />}
            {app.badge && <Badge $small={app.badge === '•'}>{app.badge}</Badge>}
          </DockSlot>
        ))}
        <DockDivider />
        <DockSlot $width={70}><FolderStack /></DockSlot>
        <DockSlot $width={99}><Downloads /></DockSlot>
        <DockSlot $width={68}><Trash /></DockSlot>
      </Dock>
    </Desktop>
  );
}
